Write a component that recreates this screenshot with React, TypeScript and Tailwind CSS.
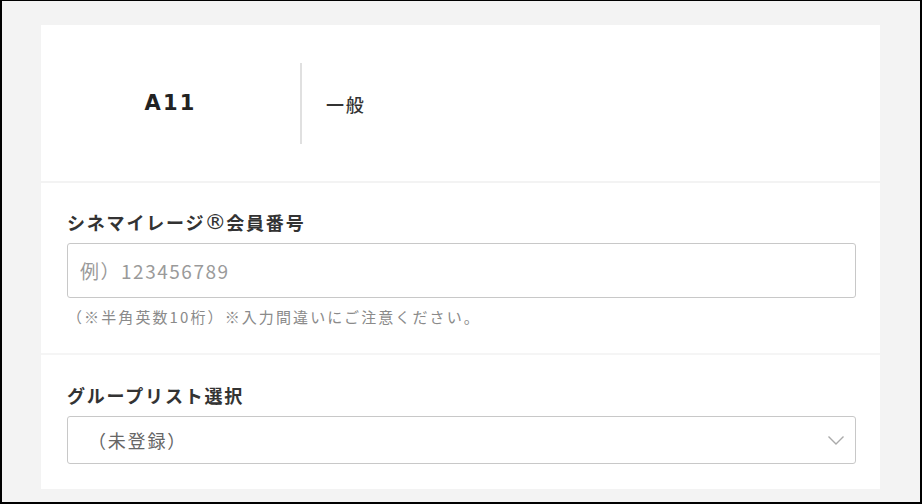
const jp = "font-['Noto_Sans_CJK_JP','Noto_Sans',sans-serif]";

export default function App() {
  return (
    <div className={`w-[922px] h-[504px] border-l-2 border-r-2 border-t border-b-2 border-black bg-[#f3f3f3] pl-[39px] pt-[24px] ${jp}`}>
      <div className="w-[839px] h-[464px] bg-white flex flex-col">
        {/* seat / ticket type */}
        <div className="h-[158px] flex items-center border-b-2 border-[#f3f3f3]">
          <div className="w-[259px] text-center font-['DejaVu_Sans',sans-serif] font-bold text-[21px] tracking-[0.1em] text-[#222] pt-[2px]">
            A11
          </div>
          <div className="w-[2px] h-[81px] bg-[#e0e0e0]" />
          <div className="pl-[24px] text-[18px] font-medium tracking-[0.1em] text-[#333] pt-[2px]">一般</div>
        </div>

        {/* member number */}
        <div className="px-[26px] pt-[26px] pb-[25px] border-b-2 border-[#f5f5f5]">
          <div className="h-[26px] text-[18px] leading-[26px] font-bold tracking-[0.1em] text-[#333]">
            シネマイレージ<span className="inline-block h-[26px] font-['DejaVu_Sans',sans-serif] font-normal text-[22px] leading-[26px] tracking-normal align-top -ml-[1px]">®</span>会員番号
          </div>
          <input
            className="mt-[8px] w-[789px] h-[55px] border border-[#c8c8c8] rounded-[3px] px-[12px] text-[19px] tracking-[0.08em] text-[#333] placeholder:text-[#9a9a9a] outline-none"
            placeholder="例）123456789"
          />
          <div className="mt-[8px] text-[15px] leading-[22px] tracking-[0.14em] text-[#8a8a8a]">
            （※半角英数10桁）※入力間違いにご注意ください。
          </div>
        </div>

        {/* group list */}
        <div className="px-[26px] pt-[27px]">
          <div className="text-[18px] leading-[26px] font-bold tracking-[0.1em] text-[#333]">
            グループリスト選択
          </div>
          <div className="mt-[8px] w-[789px] h-[48px] border border-[#c8c8c8] rounded-[3px] flex items-center justify-between pl-[20px] pr-[11px]">
            <span className="text-[18px] tracking-[0.1em] text-[#666]">（未登録）</span>
            <svg width="16" height="9" viewBox="0 0 16 9" fill="none" className="text-[#aaa]">
              <polyline points="0.5,0.5 8,8 15.5,0.5" stroke="currentColor" strokeWidth="1.4" />
            </svg>
          </div>
        </div>
      </div>
    </div>
  );
}
